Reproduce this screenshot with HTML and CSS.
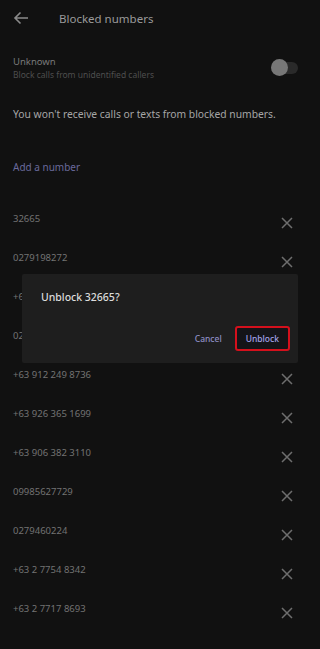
FILE: index.html
```html
<!DOCTYPE html>
<html>
<head>
<meta charset="utf-8">
<link rel="stylesheet" href="styles.css">
</head>
<body>
<div class="screen">
  <header class="topbar">
    <svg class="back" width="16" height="14" viewBox="0 0 16 14"><path d="M15 7H2M7.5 1.5L2 7l5.5 5.5" fill="none" stroke="#8a8a8a" stroke-width="1.6"/></svg>
    <div class="title">Blocked numbers</div>
  </header>
  <section class="unknown">
    <div class="unknown-text">
      <div class="unknown-title">Unknown</div>
      <div class="unknown-sub">Block calls from unidentified callers</div>
    </div>
    <div class="toggle"><div class="thumb"></div></div>
  </section>
  <p class="notice">You won't receive calls or texts from blocked numbers.</p>
  <div class="add">Add a number</div>
  <ul class="list">
    <li class="row"><span class="num">32665</span><svg class="x" viewBox="0 0 12 12"><path d="M1 1l10 10M11 1L1 11"/></svg></li>
    <li class="row"><span class="num">0279198272</span><svg class="x" viewBox="0 0 12 12"><path d="M1 1l10 10M11 1L1 11"/></svg></li>
    <li class="row"><span class="num">+63 917 555 0142</span><svg class="x" viewBox="0 0 12 12"><path d="M1 1l10 10M11 1L1 11"/></svg></li>
    <li class="row"><span class="num">0287654321</span><svg class="x" viewBox="0 0 12 12"><path d="M1 1l10 10M11 1L1 11"/></svg></li>
    <li class="row"><span class="num">+63 912 249 8736</span><svg class="x" viewBox="0 0 12 12"><path d="M1 1l10 10M11 1L1 11"/></svg></li>
    <li class="row"><span class="num">+63 926 365 1699</span><svg class="x" viewBox="0 0 12 12"><path d="M1 1l10 10M11 1L1 11"/></svg></li>
    <li class="row"><span class="num">+63 906 382 3110</span><svg class="x" viewBox="0 0 12 12"><path d="M1 1l10 10M11 1L1 11"/></svg></li>
    <li class="row"><span class="num">09985627729</span><svg class="x" viewBox="0 0 12 12"><path d="M1 1l10 10M11 1L1 11"/></svg></li>
    <li class="row"><span class="num">0279460224</span><svg class="x" viewBox="0 0 12 12"><path d="M1 1l10 10M11 1L1 11"/></svg></li>
    <li class="row"><span class="num">+63 2 7754 8342</span><svg class="x" viewBox="0 0 12 12"><path d="M1 1l10 10M11 1L1 11"/></svg></li>
    <li class="row"><span class="num">+63 2 7717 8693</span><svg class="x" viewBox="0 0 12 12"><path d="M1 1l10 10M11 1L1 11"/></svg></li>
  </ul>
  <div class="dialog">
    <div class="dialog-title">Unblock 32665?</div>
    <div class="dialog-actions">
      <span class="btn">Cancel</span>
      <span class="btn btn-primary">Unblock</span>
    </div>
  </div>
</div>
</body>
</html>
```
FILE: styles.css
```css
html, body {
  margin: 0;
  padding: 0;
  background: #111111;
}
.screen {
  position: relative;
  width: 320px;
  height: 649px;
  overflow: hidden;
  background: #111111;
  font-family: "Noto Sans", Roboto, sans-serif;
  color: #8a8a8a;
}
.topbar {
  height: 36px;
  display: flex;
  align-items: center;
  padding-left: 13px;
}
.back { display: block; }
.title {
  margin-left: 30px;
  font-size: 11.5px;
  color: #9a9a9a;
}
.unknown {
  margin-top: 19px;
  display: flex;
  align-items: center;
  justify-content: space-between;
  padding: 0 22px 0 13px;
}
.unknown-title {
  font-size: 9.5px;
  line-height: 13px;
  color: #7a7a7a;
}
.unknown-sub {
  font-size: 8.5px;
  line-height: 13px;
  color: #4e4e4e;
}
.toggle {
  position: relative;
  width: 26px;
  height: 12px;
  border-radius: 6px;
  background: #2a2a2a;
}
.thumb {
  position: absolute;
  left: -1px;
  top: -3px;
  width: 17px;
  height: 17px;
  border-radius: 50%;
  background: #777777;
}
.notice {
  margin: 26px 0 0;
  padding-left: 13px;
  font-size: 10.3px;
  line-height: 14px;
  color: #a6a6a6;
}
.add {
  margin-top: 39px;
  padding-left: 13px;
  font-size: 10px;
  line-height: 14px;
  color: #6a6a9c;
}
.list {
  list-style: none;
  margin: 25px 0 0;
  padding: 0;
}
.row {
  height: 39px;
  display: flex;
  align-items: center;
  justify-content: space-between;
  padding: 0 27px 0 13px;
}
.num {
  font-size: 9.5px;
  color: #737373;
}
.x {
  width: 12px;
  height: 12px;
  margin-top: 8px;
  fill: none;
  stroke: #6e6e6e;
  stroke-width: 1.5;
}
.dialog {
  position: absolute;
  left: 22px;
  top: 274px;
  width: 276px;
  height: 89px;
  background: #1e1e1e;
  border-radius: 2px;
  box-sizing: border-box;
  padding: 16px 0 0 19px;
}
.dialog-title {
  font-size: 10.5px;
  line-height: 14px;
  color: #dcdcdc;
  font-weight: 500;
}
.dialog-actions {
  display: flex;
  justify-content: flex-end;
  align-items: center;
  gap: 13px;
  margin-top: 22px;
  padding-right: 8px;
}
.btn {
  font-size: 8.5px;
  font-weight: 500;
  color: #8f8fc4;
}
.btn-primary {
  color: #a4a4ec;
  border: 2px solid #d4101c;
  border-radius: 3px;
  padding: 5px 9px;
  background: #141418;
}
```
